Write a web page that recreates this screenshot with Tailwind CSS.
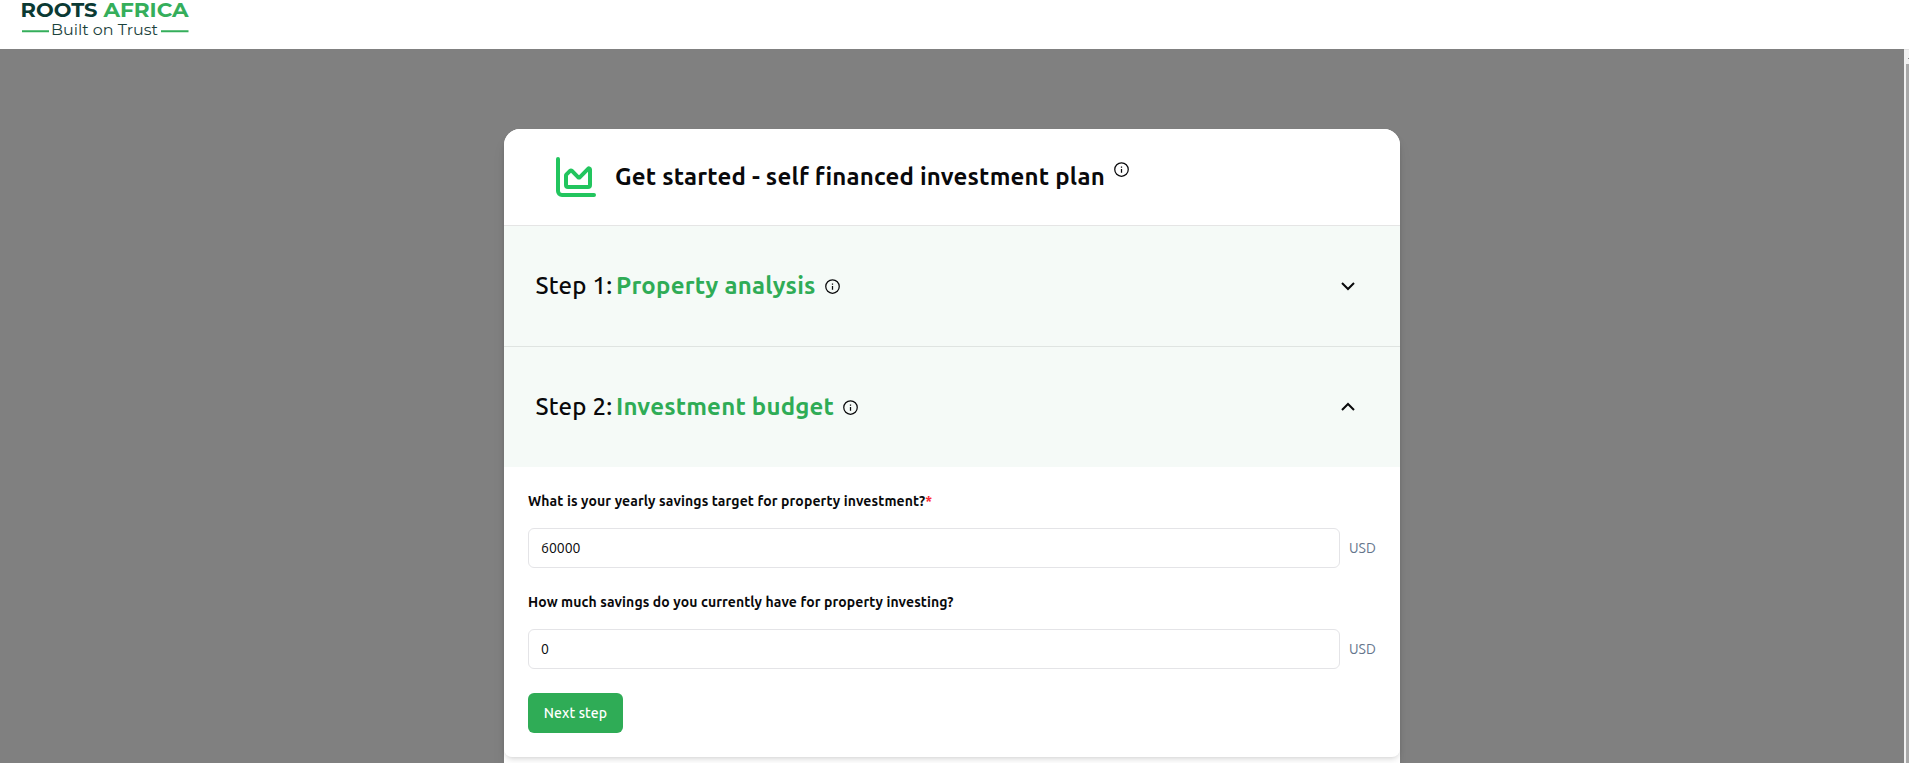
<!DOCTYPE html>
<html lang="en">
<head>
    <meta charset="UTF-8">
    <meta name="viewport" content="width=device-width, initial-scale=1.0">
    <title>Roots Africa</title>
    <script src="https://cdn.jsdelivr.net/npm/@tailwindcss/browser@4"></script>
</head>
<body class="h-screen overflow-hidden flex flex-col bg-white text-[#09090b] font-['Ubuntu','Noto_Sans',sans-serif]">
    <svg class="hidden">
        <symbol id="info" viewBox="0 0 24 24">
            <path fill="currentColor" d="M11 11h2v6h-2zm0-4h2v2h-2z"/>
            <circle cx="12" cy="12" r="10.8" fill="none" stroke="currentColor" stroke-width="2"/>
        </symbol>
    </svg>

    <!-- Top bar -->
    <header class="h-[49px] shrink-0 pl-5">
        <svg class="block" width="170" height="49" viewBox="20 0 170 49">
            <text x="20.5" y="17" font-family="Montserrat, Inter" font-size="19.5" font-weight="700" fill="#0b3a34" textLength="77" lengthAdjust="spacingAndGlyphs">ROOTS</text>
            <text x="103.5" y="17" font-family="Montserrat, Inter" font-size="19.5" font-weight="700" fill="#35ae5b" textLength="85" lengthAdjust="spacingAndGlyphs">AFRICA</text>
            <text x="51" y="35" font-family="Montserrat, Inter" font-size="15" fill="#1b423c" textLength="107" lengthAdjust="spacingAndGlyphs">Built on Trust</text>
            <path d="M22 31.3H49M161 31.3H188.5" stroke="#35ae5b" stroke-width="2"/>
        </svg>
    </header>

    <div class="flex flex-1 min-h-0">
        <main class="flex-1 bg-[#808080] pt-20 overflow-hidden">
            <div class="w-[896px] h-[800px] ml-[504px] bg-white rounded-t-2xl shadow-lg">
                <div class="rounded-t-2xl rounded-b-lg shadow-md bg-white h-[628px]">
                    <!-- Title -->
                    <div class="h-[97px] flex items-center pl-12 border-b border-[#e5e5e5]">
                        <svg class="size-12" viewBox="0 0 24 24" fill="none" stroke="#22c55e" stroke-width="2" stroke-linecap="round" stroke-linejoin="round">
                            <path d="M3 3v16a2 2 0 0 0 2 2h16"/>
                            <path d="M7 11.207a.5.5 0 0 1 .146-.353l2-2a.5.5 0 0 1 .708 0l3.292 3.292a.5.5 0 0 0 .708 0l4.292-4.292a.5.5 0 0 1 .854.353V16a1 1 0 0 1-1 1H8a1 1 0 0 1-1-1z"/>
                        </svg>
                        <h1 class="ml-[15px] w-[491px] text-2xl font-bold tracking-[0.2px] whitespace-nowrap">Get started - self financed investment plan</h1>
                        <svg class="size-[15px] ml-2 mb-4"><use href="#info"/></svg>
                    </div>

                    <!-- Step 1 -->
                    <div class="h-[121px] flex items-center pl-[31.5px] pr-10 bg-[#f5faf7] border-b border-[#dfe4e1]">
                        <h2 class="w-[80.5px] text-2xl font-medium tracking-[0.2px] whitespace-nowrap">Step 1:</h2>
                        <h2 class="w-[201px] text-2xl font-bold tracking-[0.24px] text-[#2fac56] whitespace-nowrap">Property analysis</h2>
                        <svg class="size-[15px] ml-2"><use href="#info"/></svg>
                        <svg class="size-6 ml-auto" viewBox="0 0 24 24" fill="none" stroke="currentColor" stroke-width="2"><path d="m6 9 6 6 6-6"/></svg>
                    </div>

                    <!-- Step 2 -->
                    <div class="h-[120px] flex items-center pl-[31.5px] pr-10 bg-[#f5faf7]">
                        <h2 class="w-[80.5px] text-2xl font-medium tracking-[0.2px] whitespace-nowrap">Step 2:</h2>
                        <h2 class="w-[219px] text-2xl font-bold tracking-[0.2px] text-[#2fac56] whitespace-nowrap">Investment budget</h2>
                        <svg class="size-[15px] ml-2"><use href="#info"/></svg>
                        <svg class="size-6 ml-auto" viewBox="0 0 24 24" fill="none" stroke="currentColor" stroke-width="2"><path d="m6 15 6-6 6 6"/></svg>
                    </div>

                    <form class="px-6 pt-6 text-sm">
                        <label class="block leading-5 font-bold tracking-[0.12px] whitespace-nowrap">What is your yearly savings target for property investment?<span class="text-red-500">*</span></label>
                        <div class="mt-[17px] flex items-center">
                            <input type="text" value="60000" class="w-[812px] h-10 px-3 rounded-md border border-[#e4e4e7]">
                            <span class="ml-[9px] text-[#64748b]">USD</span>
                        </div>
                        <label class="block mt-6 leading-5 font-bold tracking-[0.1px] whitespace-nowrap">How much savings do you currently have for property investing?</label>
                        <div class="mt-[17px] flex items-center">
                            <input type="text" value="0" class="w-[812px] h-10 px-3 rounded-md border border-[#e4e4e7]">
                            <span class="ml-[9px] text-[#64748b]">USD</span>
                        </div>
                        <button type="button" class="mt-6 w-[95px] h-10 rounded-md bg-[#2fac56] text-white font-medium tracking-[0.1px] whitespace-nowrap">Next step</button>
                    </form>
                </div>
            </div>
        </main>

        <!-- Scrollbar -->
        <div class="w-[5px] bg-[#f1f1f1] border-t border-[#e2e2e2] pl-0.5 flex flex-col">
            <div class="h-[14px] pt-2 pl-0.5"><div class="h-px bg-[#8a8a8a]"></div></div>
            <div class="flex-1 bg-[#a8a8a8]"></div>
        </div>
    </div>
</body>
</html>
